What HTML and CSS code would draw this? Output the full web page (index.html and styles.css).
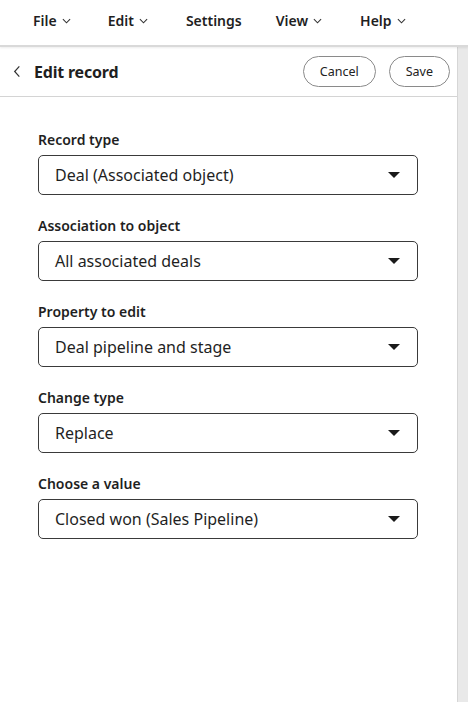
FILE: index.html
```html
<!DOCTYPE html>
<html lang="en">
<head>
    <meta charset="UTF-8">
    <meta name="viewport" content="width=device-width, initial-scale=1.0">
    <title>Edit record</title>
    <link rel="stylesheet" href="styles.css">
</head>
<body>
    <nav class="menubar">
        <span class="menu-item">File <svg class="chev" viewBox="0 0 10 6"><path d="M1 1l4 4 4-4"/></svg></span>
        <span class="menu-item">Edit <svg class="chev" viewBox="0 0 10 6"><path d="M1 1l4 4 4-4"/></svg></span>
        <span class="menu-item">Settings</span>
        <span class="menu-item">View <svg class="chev" viewBox="0 0 10 6"><path d="M1 1l4 4 4-4"/></svg></span>
        <span class="menu-item">Help <svg class="chev" viewBox="0 0 10 6"><path d="M1 1l4 4 4-4"/></svg></span>
    </nav>

    <div class="workspace">
        <section class="panel">
            <header class="panel-header">
                <button class="back"><svg viewBox="0 0 8 14"><path d="M6.5 1.5L1.5 7l5 5.5"/></svg></button>
                <h1>Edit record</h1>
                <button class="pill">Cancel</button>
                <button class="pill">Save</button>
            </header>

            <form class="fields">
                <label class="field">
                    <span class="field-label">Record type</span>
                    <span class="select">Deal (Associated object)<i class="caret"></i></span>
                </label>
                <label class="field">
                    <span class="field-label">Association to object</span>
                    <span class="select">All associated deals<i class="caret"></i></span>
                </label>
                <label class="field">
                    <span class="field-label">Property to edit</span>
                    <span class="select">Deal pipeline and stage<i class="caret"></i></span>
                </label>
                <label class="field">
                    <span class="field-label">Change type</span>
                    <span class="select">Replace<i class="caret"></i></span>
                </label>
                <label class="field">
                    <span class="field-label">Choose a value</span>
                    <span class="select">Closed won (Sales Pipeline)<i class="caret"></i></span>
                </label>
            </form>
        </section>
        <div class="rail"></div>
    </div>
</body>
</html>
```

FILE: styles.css
```css
* {
    box-sizing: border-box;
}
html, body {
    height: 100%;
}
body {
    margin: 0;
    font-family: 'Noto Sans', 'Open Sans', sans-serif;
    color: #1f1f1f;
    background: #fff;
    display: flex;
    flex-direction: column;
    overflow: hidden;
}
.menubar {
    height: 47px;
    display: flex;
    align-items: center;
    padding: 0 0 4px 33px;
    background: #fff;
    border-bottom: 2px solid #d9d9d9;
    box-shadow: 0 1px 2px rgba(0, 0, 0, 0.08);
    position: relative;
    z-index: 1;
}
.menu-item {
    font-size: 14px;
    font-weight: 600;
    display: flex;
    align-items: center;
    gap: 5px;
}
.menu-item:nth-child(1) { margin-right: 37px; }
.menu-item:nth-child(2) { margin-right: 38px; }
.menu-item:nth-child(3) { margin-right: 34px; }
.menu-item:nth-child(4) { margin-right: 38px; }
.chev {
    width: 9px;
    height: 6px;
    fill: none;
    stroke: #333;
    stroke-width: 1.2;
}
.workspace {
    flex: 1;
    display: flex;
}
.panel {
    flex: 1;
    background: #fff;
}
.rail {
    width: 11px;
    background: #e9e9e9;
    border-left: 1px solid #d6d6d6;
}
.panel-header {
    height: 50px;
    display: flex;
    align-items: center;
    padding: 0 7px 0 10px;
    border-bottom: 1px solid #d4d4d4;
}
.back {
    border: none;
    background: none;
    padding: 0;
    width: 14px;
    height: 14px;
    margin-right: 10px;
    display: flex;
    align-items: center;
    justify-content: center;
}
.back svg {
    width: 8px;
    height: 13px;
    fill: none;
    stroke: #333;
    stroke-width: 1.3;
}
.panel-header h1 {
    flex: 1;
    margin: 0;
    font-size: 16px;
    font-weight: 700;
    letter-spacing: -0.2px;
}
.pill {
    font-family: inherit;
    font-size: 12.5px;
    color: #222;
    background: #fff;
    border: 1px solid #8a8a8a;
    border-radius: 16px;
    height: 31px;
    padding: 0 16px;
    margin-left: 13px;
}
.fields {
    display: flex;
    flex-direction: column;
    gap: 20px;
    padding: 32px 39px 0 38px;
}
.field {
    display: flex;
    flex-direction: column;
    gap: 5px;
}
.field-label {
    font-size: 14px;
    font-weight: 600;
    line-height: 21px;
}
.select {
    height: 40px;
    border: 1px solid #3a3a3a;
    border-radius: 5px;
    display: flex;
    align-items: center;
    padding: 0 17px 0 16px;
    font-size: 16px;
    justify-content: space-between;
}
.caret {
    width: 0;
    height: 0;
    border-left: 6px solid transparent;
    border-right: 6px solid transparent;
    border-top: 6px solid #1a1a1a;
}
```
